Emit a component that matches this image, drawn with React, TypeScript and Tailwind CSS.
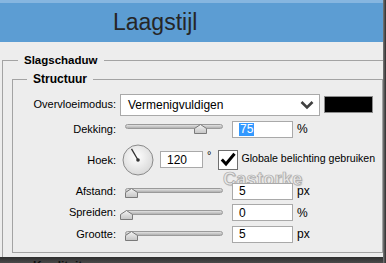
import React from 'react';

const Thumb = ({ className }: { className: string }) => (
  <svg
    className={`absolute top-[1px] ${className}`}
    width="13"
    height="10"
    viewBox="0 0 13 10"
  >
    <defs>
      <linearGradient id="tg" x1="0" y1="0" x2="0" y2="1">
        <stop offset="0" stopColor="#f4f4f4" />
        <stop offset="1" stopColor="#c4c4c4" />
      </linearGradient>
    </defs>
    <polygon
      points="0.5,4.5 6.5,0.5 12.5,4.5 12.5,9.5 0.5,9.5"
      fill="url(#tg)"
      stroke="#7a7a7a"
      strokeWidth="1"
    />
  </svg>
);

const Track = ({ children }: { children: React.ReactNode }) => (
  <div className="relative h-[12px] w-[98px]">
    <div className="absolute inset-x-0 top-[1px] h-[5px] rounded-full border border-[#9a9a9a] bg-[linear-gradient(#e2e2e2,#b0b0b0)]" />
    {children}
  </div>
);

const Field = ({ value, selected }: { value: string; selected?: boolean }) => (
  <div className="relative flex h-[17px] w-[61px] items-center border border-[#a9a9a9] bg-white pl-[6px] text-[12px] text-black">
    {selected ? (
      <span className="bg-[#3399ff] px-[1px] leading-[13px] text-white">{value}</span>
    ) : (
      <span>{value}</span>
    )}
  </div>
);

const Label = ({ text }: { text: string }) => (
  <div className="w-[103px] text-right text-[11px] text-black">{text}</div>
);

export default function App() {
  return (
    <div className="flex h-[263px] w-[386px] overflow-hidden bg-[#ededed] font-['Liberation_Sans',Arial,sans-serif]">
      <div className="flex w-[383px] flex-col">
        <div className="flex h-[42px] shrink-0 items-center border-t-[3px] border-[#86b6e0] bg-[#5c9dd3] pl-[113px]">
          <span className="text-[23px] leading-none text-[#262626]">Laagstijl</span>
        </div>

        <fieldset className="mt-[11px] ml-[2px] flex h-[204px] shrink-0 flex-col border-t border-l border-[#a3a3a3]">
          <legend className="ml-[15px] px-[6px] text-[11.5px] leading-[14px] font-bold text-black">
            Slagschaduw
          </legend>

          <fieldset className="relative mt-[5px] ml-[9px] w-[371px] border border-[#a3a3a3] pb-[7px]">
            <legend className="ml-[14px] px-[6px] text-[12px] leading-[14px] font-bold text-black">
              Structuur
            </legend>

            {/* watermark, painted below the fields */}
            <span className="absolute top-[84px] left-[210px] text-[18px] leading-none font-bold tracking-[0.3px] text-[#e8e8e8] [-webkit-text-stroke:0.7px_#a8a8a8] [text-shadow:1px_1px_1px_#c4c4c4]">
              Castorke
            </span>

            {/* Overvloeimodus */}
            <div className="mt-[6px] flex h-[25px] items-center">
              <Label text="Overvloeimodus:" />
              <div className="ml-[4px] flex h-[22px] w-[200px] items-center justify-between border border-[#a9a9a9] bg-white pr-[5px] pl-[7px] text-[12px] text-black">
                <span>Vermenigvuldigen</span>
                <svg width="14" height="10" viewBox="0 0 14 10">
                  <path d="M1.5 2 L7 7.5 L12.5 2" fill="none" stroke="#404040" strokeWidth="2.6" />
                </svg>
              </div>
              <div className="ml-[4px] h-[17px] w-[49px] border border-[#8c8c8c] bg-black" />
            </div>

            {/* Dekking */}
            <div className="flex h-[24px] items-center">
              <Label text="Dekking:" />
              <div className="ml-[9px]">
                <Track>
                  <Thumb className="left-[69px]" />
                </Track>
              </div>
              <div className="ml-[9px]">
                <Field value="75" selected />
              </div>
              <span className="ml-[4px] text-[12px] text-black">%</span>
            </div>

            {/* Hoek */}
            <div className="flex h-[39px] items-center">
              <Label text="Hoek:" />
              <svg className="ml-[6px] -mt-[2px]" width="32" height="32" viewBox="0 0 32 32">
                <defs>
                  <radialGradient id="dial" cx="0.45" cy="0.4" r="0.65">
                    <stop offset="0" stopColor="#ffffff" />
                    <stop offset="1" stopColor="#d6d6d6" />
                  </radialGradient>
                </defs>
                <circle cx="16" cy="16" r="15" fill="url(#dial)" stroke="#8a8a8a" strokeWidth="1" />
                <line x1="16" y1="16" x2="9.5" y2="4.8" stroke="#333" strokeWidth="1.3" />
                <circle cx="16" cy="16" r="1.8" fill="#333" />
              </svg>
              <div className="ml-[6px] -mt-[2px] flex h-[17px] w-[43px] items-center border border-[#a9a9a9] bg-white pl-[6px] text-[12px] text-black">
                120
              </div>
              <span className="ml-[4px] -mt-[10px] text-[11px] text-black">°</span>
              <div className="ml-[7px] -mt-[2px] flex h-[20px] w-[20px] items-center justify-center border border-[#6f6f6f] bg-white">
                <svg width="16" height="15" viewBox="0 0 16 15">
                  <path d="M1.8 7.5 L6 12 L14.5 1.8" fill="none" stroke="#000" strokeWidth="3" />
                </svg>
              </div>
              <span className="ml-[3px] -mt-[4px] text-[10.6px] text-black">Globale belichting gebruiken</span>
            </div>

            {/* Afstand */}
            <div className="flex h-[22px] items-center">
              <Label text="Afstand:" />
              <div className="ml-[9px] mt-[4px]">
                <Track>
                  <Thumb className="left-[0px]" />
                </Track>
              </div>
              <div className="ml-[9px]">
                <Field value="5" />
              </div>
              <span className="ml-[4px] text-[12px] text-black">px</span>
            </div>

            {/* Spreiden */}
            <div className="flex h-[21px] items-center">
              <Label text="Spreiden:" />
              <div className="ml-[9px] mt-[4px]">
                <Track>
                  <Thumb className="-left-[5px]" />
                </Track>
              </div>
              <div className="ml-[9px]">
                <Field value="0" />
              </div>
              <span className="ml-[4px] text-[12px] text-black">%</span>
            </div>

            {/* Grootte */}
            <div className="flex h-[22px] items-center">
              <Label text="Grootte:" />
              <div className="ml-[9px] mt-[4px]">
                <Track>
                  <Thumb className="left-[0px]" />
                </Track>
              </div>
              <div className="ml-[9px]">
                <Field value="5" />
              </div>
              <span className="ml-[4px] text-[12px] text-black">px</span>
            </div>
          </fieldset>
        </fieldset>

        <div className="h-[6px] shrink-0 overflow-hidden bg-[linear-gradient(#2e2e2e,#4a4a4a)] pl-[33px]">
          <span className="block pt-[2px] text-[12px] leading-[14px] font-bold text-[#111]">Kwaliteit</span>
        </div>
      </div>
      <div className="w-[3px] shrink-0 bg-[linear-gradient(90deg,#7a7a7a,#2c2c2c)]" />
    </div>
  );
}
